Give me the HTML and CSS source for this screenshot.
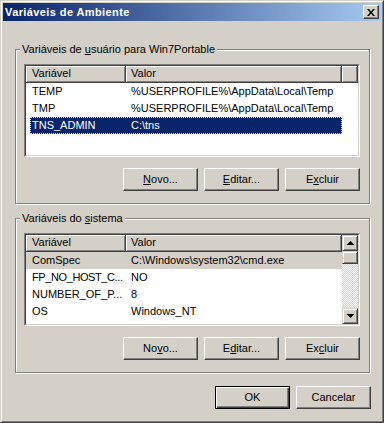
FILE: index.html
```html
<!DOCTYPE html>
<html lang="pt-BR">
<head>
<meta charset="utf-8">
<title>Variáveis de Ambiente</title>
<link rel="stylesheet" href="styles.css">
</head>
<body>
<div class="window">
  <div class="frame">
    <div class="titlebar">
      <span class="title">Variáveis de Ambiente</span>
      <button class="close" aria-label="Fechar">
        <svg width="8" height="7" viewBox="0 0 8 7"><path d="M0 0h2l2 2.5 2-2.5h2l-3 3.5 3 3.5h-2l-2-2.5-2 2.5H0l3-3.5z" fill="#000"/></svg>
      </button>
    </div>
    <div class="client">
      <div class="group">
        <span class="legend">Variáveis de <u>u</u>suário para Win7Portable</span>
        <div class="list">
          <div class="list-inner">
            <div class="list-main">
              <div class="header">
                <div class="hcell c1">Variável</div>
                <div class="hcell c2">Valor</div>
                <div class="hcell fill"></div>
              </div>
              <div class="row"><span class="c1">TEMP</span><span class="c2">%USERPROFILE%\AppData\Local\Temp</span></div>
              <div class="row"><span class="c1">TMP</span><span class="c2">%USERPROFILE%\AppData\Local\Temp</span></div>
              <div class="row sel"><span class="c1">TNS_ADMIN</span><span class="c2">C:\tns</span></div>
            </div>
          </div>
        </div>
        <div class="buttons">
          <button class="btn"><u>N</u>ovo...</button>
          <button class="btn"><u>E</u>ditar...</button>
          <button class="btn">E<u>x</u>cluir</button>
        </div>
      </div>

      <div class="group">
        <span class="legend">Variáveis do <u>s</u>istema</span>
        <div class="list">
          <div class="list-inner">
            <div class="list-main">
              <div class="header">
                <div class="hcell c1">Variável</div>
                <div class="hcell c2">Valor</div>
              </div>
              <div class="row inactive"><span class="c1">ComSpec</span><span class="c2">C:\Windows\system32\cmd.exe</span></div>
              <div class="row"><span class="c1 tight">FP_NO_HOST_C...</span><span class="c2">NO</span></div>
              <div class="row"><span class="c1">NUMBER_OF_P...</span><span class="c2">8</span></div>
              <div class="row"><span class="c1">OS</span><span class="c2">Windows_NT</span></div>
              <div class="row"><span class="c1">Path</span><span class="c2">c:\oracle\product\10.2.0\client_1\bin;C:\Windows</span></div>
            </div>
            <div class="vscroll">
              <div class="sb-btn">
                <svg width="7" height="4" viewBox="0 0 7 4"><path d="M3 0h1v1h1v1h1v1h1v1H0V3h1V2h1V1h1z" fill="#000"/></svg>
              </div>
              <div class="sb-thumb"></div>
              <div class="sb-track"></div>
              <div class="sb-btn">
                <svg width="7" height="4" viewBox="0 0 7 4"><path d="M0 0h7v1H6v1H5v1H4v1H3V3H2V2H1V1H0z" fill="#000"/></svg>
              </div>
            </div>
          </div>
        </div>
        <div class="buttons">
          <button class="btn">No<u>v</u>o...</button>
          <button class="btn">E<u>d</u>itar...</button>
          <button class="btn">Ex<u>c</u>luir</button>
        </div>
      </div>

      <div class="footer">
        <button class="btn default">OK</button>
        <button class="btn">Cancelar</button>
      </div>
    </div>
  </div>
</div>
</body>
</html>
```

FILE: styles.css
```css
* {
  box-sizing: border-box;
}

html, body {
  margin: 0;
  padding: 0;
  background: #d4d0c8;
}

body {
  font-family: "Liberation Sans", Arial, sans-serif;
  font-size: 11px;
  color: #000;
}

u {
  text-decoration: underline;
  text-underline-offset: 1px;
}

.window {
  width: 384px;
  height: 423px;
  border: 1px solid;
  border-color: #d4d0c8 #404040 #404040 #d4d0c8;
  background: #d4d0c8;
}

.frame {
  height: 100%;
  border: 1px solid;
  border-color: #fff #808080 #808080 #fff;
  padding: 1px;
}

.titlebar {
  height: 18px;
  display: flex;
  align-items: center;
  justify-content: space-between;
  padding: 0 2px 0 2px;
  background: linear-gradient(to right, #0a246a, #a6caf0);
}

.title {
  color: #fff;
  font-weight: bold;
  font-size: 11px;
  letter-spacing: 0.4px;
  line-height: 18px;
  white-space: nowrap;
}

.close {
  width: 16px;
  height: 14px;
  padding: 0;
  margin: 0;
  display: flex;
  align-items: center;
  justify-content: center;
  background: #d4d0c8;
  border: 1px solid;
  border-color: #fff #404040 #404040 #fff;
  box-shadow: inset -1px -1px #808080;
}

.close svg {
  display: block;
}

.client {
  padding: 28px 0 0 12px;
}

.group {
  position: relative;
  width: 355px;
  height: 155px;
  border: 1px solid #808080;
  box-shadow: inset 1px 1px #fff, 1px 1px #fff;
  padding: 14px 9px 0 8px;
}

.group + .group {
  margin-top: 14px;
}

.legend {
  position: absolute;
  top: -7px;
  left: 4px;
  padding: 0 2px;
  background: #d4d0c8;
  line-height: 13px;
  white-space: nowrap;
}

.list {
  width: 336px;
  height: 93px;
  border: 1px solid;
  border-color: #808080 #fff #fff #808080;
}

.list-inner {
  height: 100%;
  border: 1px solid;
  border-color: #404040 #d4d0c8 #d4d0c8 #404040;
  background: #fff;
  display: flex;
  overflow: hidden;
}

.list-main {
  flex: 1;
  min-width: 0;
  overflow: hidden;
}

.header {
  display: flex;
  height: 17px;
}

.hcell {
  height: 17px;
  background: #d4d0c8;
  border-right: 1px solid #404040;
  border-bottom: 1px solid #404040;
  box-shadow: inset 1px 1px #fff, inset -1px -1px #808080;
  padding-left: 6px;
  line-height: 15px;
  white-space: nowrap;
}

.hcell.c1 {
  width: 100px;
}

.hcell.c2 {
  width: 216px;
  padding-left: 5px;
}

.hcell.fill {
  flex: 1;
  padding: 0;
}

.row {
  display: flex;
  width: 316px;
  height: 17px;
  line-height: 17px;
  white-space: nowrap;
}

.row .c1 {
  width: 100px;
  padding-left: 6px;
  overflow: hidden;
}

.row .c1.tight {
  letter-spacing: -0.4px;
}

.row .c2 {
  width: 216px;
  padding-left: 5px;
  overflow: hidden;
}

.row.sel {
  margin-left: 4px;
  width: 312px;
  background: #0a246a;
  color: #fff;
  outline: 1px dotted #f5db95;
  outline-offset: -1px;
}

.row.sel .c1 {
  width: 96px;
  padding-left: 2px;
}

.row.inactive {
  background: #d4d0c8;
}

.vscroll {
  width: 16px;
  flex: none;
  display: flex;
  flex-direction: column;
}

.sb-btn,
.sb-thumb {
  background: #d4d0c8;
  border: 1px solid;
  border-color: #d4d0c8 #404040 #404040 #d4d0c8;
  box-shadow: inset 1px 1px #fff, inset -1px -1px #808080;
}

.sb-btn {
  height: 16px;
  display: flex;
  align-items: center;
  justify-content: center;
}

.sb-btn svg {
  display: block;
}

.sb-thumb {
  height: 13px;
}

.sb-track {
  flex: 1;
  background: repeating-conic-gradient(#d4d0c8 0 25%, #fff 0 50%) 0 0 / 2px 2px;
}

.buttons {
  display: flex;
  justify-content: flex-end;
  gap: 6px;
  margin-top: 11px;
  width: 336px;
}

.btn {
  width: 75px;
  height: 23px;
  margin: 0;
  padding: 0;
  font-family: inherit;
  font-size: 11px;
  color: #000;
  background: #d4d0c8;
  border: 1px solid;
  border-color: #fff #404040 #404040 #fff;
  box-shadow: inset -1px -1px #808080;
  line-height: 21px;
  text-align: center;
}

.btn.default {
  border: 1px solid #000;
  box-shadow: inset 1px 1px #fff, inset -1px -1px #404040, inset -2px -2px #808080;
}

.footer {
  display: flex;
  justify-content: flex-end;
  gap: 6px;
  width: 356px;
  margin-top: 13px;
}
```
